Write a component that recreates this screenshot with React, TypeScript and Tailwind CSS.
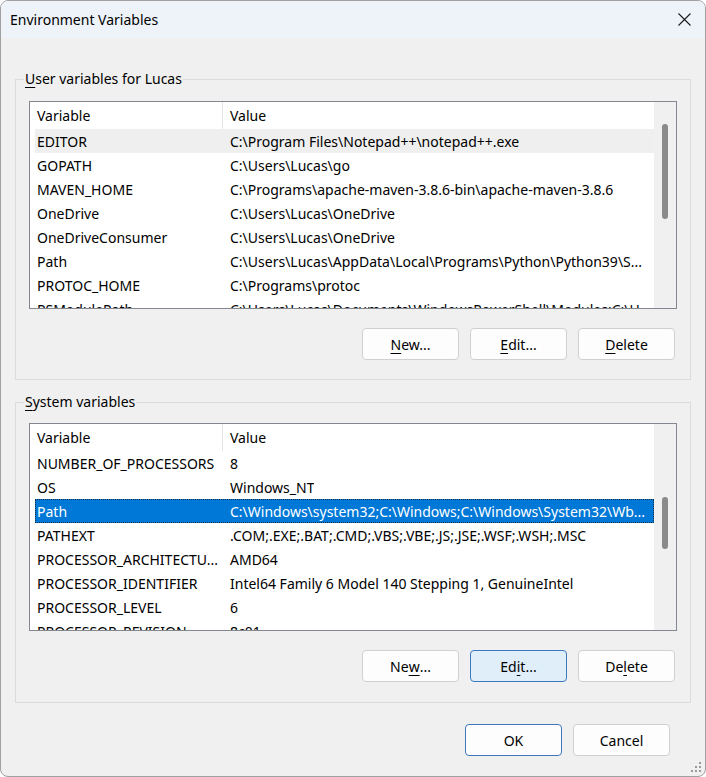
import React from "react";

type Row = [string, string];

const USER_ROWS: Row[] = [
  ["EDITOR", "C:\\Program Files\\Notepad++\\notepad++.exe"],
  ["GOPATH", "C:\\Users\\Lucas\\go"],
  ["MAVEN_HOME", "C:\\Programs\\apache-maven-3.8.6-bin\\apache-maven-3.8.6"],
  ["OneDrive", "C:\\Users\\Lucas\\OneDrive"],
  ["OneDriveConsumer", "C:\\Users\\Lucas\\OneDrive"],
  ["Path", "C:\\Users\\Lucas\\AppData\\Local\\Programs\\Python\\Python39\\S..."],
  ["PROTOC_HOME", "C:\\Programs\\protoc"],
  ["PSModulePath", "C:\\Users\\Lucas\\Documents\\WindowsPowerShell\\Modules;C:\\U..."],
];

const SYSTEM_ROWS: Row[] = [
  ["NUMBER_OF_PROCESSORS", "8"],
  ["OS", "Windows_NT"],
  ["Path", "C:\\Windows\\system32;C:\\Windows;C:\\Windows\\System32\\Wb..."],
  ["PATHEXT", ".COM;.EXE;.BAT;.CMD;.VBS;.VBE;.JS;.JSE;.WSF;.WSH;.MSC"],
  ["PROCESSOR_ARCHITECTU...", "AMD64"],
  ["PROCESSOR_IDENTIFIER", "Intel64 Family 6 Model 140 Stepping 1, GenuineIntel"],
  ["PROCESSOR_LEVEL", "6"],
  ["PROCESSOR_REVISION", "8c01"],
];

function VarList({ rows, hot, selected, thumb }: { rows: Row[]; hot?: number; selected?: number; thumb: string }) {
  return (
    <div className="w-[648px] h-[208px] border border-[#828790] bg-white flex overflow-hidden">
      <div className="flex-1 pl-[5px] overflow-hidden">
        <div className="h-[27px] flex items-center">
          <div className="w-[188px] h-full pl-[2px] flex items-center border-r border-[#e5e5e5]">Variable</div>
          <div className="pl-[7px]">Value</div>
        </div>
        {rows.map(([name, value], i) => (
          <div
            key={name}
            className={`h-[24px] flex items-center whitespace-nowrap ${
              i === selected
                ? "bg-[#0078d7] text-white outline outline-1 outline-dotted outline-[#1b2f45] -outline-offset-1"
                : i === hot
                ? "bg-[#efefef]"
                : ""
            }`}
          >
            <div className="w-[188px] pl-[2px] overflow-hidden shrink-0">{name}</div>
            <div className="pl-[7px] overflow-hidden">{value}</div>
          </div>
        ))}
      </div>
      <div className="w-[22px] bg-[#f0f0f0] flex justify-center">
        <div className={`w-[6px] rounded-full bg-[#8a8a8a] ${thumb}`} />
      </div>
    </div>
  );
}

function Btn({ children, variant }: { children: React.ReactNode; variant?: "focus" | "default" }) {
  const look =
    variant === "focus"
      ? "bg-[#e0eef9] border-[#3b79bf]"
      : variant === "default"
      ? "bg-[#fdfdfd] border-[#3b79bf]"
      : "bg-[#fdfdfd] border-[#d0d0d0]";
  return (
    <button className={`w-[97px] h-[32px] rounded-[4px] border text-[14px] flex items-center justify-center ${look}`}>
      {children}
    </button>
  );
}

const U = ({ children }: { children: React.ReactNode }) => (
  <span className="underline underline-offset-[3px] decoration-1">{children}</span>
);

export default function App() {
  return (
    <div className="w-[706px] h-[777px] bg-white font-['Noto_Sans',sans-serif] text-[14px] text-black">
      <div className="relative w-full h-full rounded-[8px] border border-[#a0a0a0] bg-[#f0f0f0] overflow-hidden flex flex-col">
        <div className="h-[37px] bg-[#eef3f9] flex items-center justify-between pl-[9px] pr-[14px] shrink-0">
          <span className="text-[14px]">Environment Variables</span>
          <svg width="13" height="13" viewBox="0 0 13 13">
            <path d="M0.5 0.5 L12.5 12.5 M12.5 0.5 L0.5 12.5" stroke="#1a1a1a" strokeWidth="1.1" fill="none" />
          </svg>
        </div>

        <fieldset className="mt-[30px] ml-[14px] w-[676px] border border-[#dcdcdc] pl-[8px] pb-[19px]">
          <legend className="px-[1px] leading-[22px]">
            <U>U</U>ser variables for Lucas
          </legend>
          <div className="ml-[5px] mt-[11px]">
            <VarList rows={USER_ROWS} hot={0} thumb="mt-[22px] h-[95px]" />
          </div>
          <div className="ml-[5px] mt-[19px] w-[648px] pr-[2px] flex justify-end gap-[11px]">
            <Btn><U>N</U>ew...</Btn>
            <Btn><U>E</U>dit...</Btn>
            <Btn><U>D</U>elete</Btn>
          </div>
        </fieldset>

        <fieldset className="mt-[11px] ml-[14px] w-[676px] border border-[#dcdcdc] pl-[8px] pb-[20px]">
          <legend className="px-[1px] leading-[22px]">
            <U>S</U>ystem variables
          </legend>
          <div className="ml-[5px] mt-[10px]">
            <VarList rows={SYSTEM_ROWS} selected={2} thumb="mt-[73px] h-[52px]" />
          </div>
          <div className="ml-[5px] mt-[19px] w-[648px] pr-[2px] flex justify-end gap-[11px]">
            <Btn>Ne<U>w</U>...</Btn>
            <Btn variant="focus">Ed<U>i</U>t...</Btn>
            <Btn>De<U>l</U>ete</Btn>
          </div>
        </fieldset>

        <div className="mt-[21px] flex justify-end gap-[11px] pr-[35px]">
          <Btn variant="default">OK</Btn>
          <Btn>Cancel</Btn>
        </div>

        <svg className="absolute right-[3px] bottom-[3px]" width="12" height="12" viewBox="0 0 12 12">
          <g fill="#9a9a9a">
            <rect x="9" y="1" width="2" height="2" />
            <rect x="5" y="5" width="2" height="2" />
            <rect x="9" y="5" width="2" height="2" />
            <rect x="1" y="9" width="2" height="2" />
            <rect x="5" y="9" width="2" height="2" />
            <rect x="9" y="9" width="2" height="2" />
          </g>
        </svg>
      </div>
    </div>
  );
}
